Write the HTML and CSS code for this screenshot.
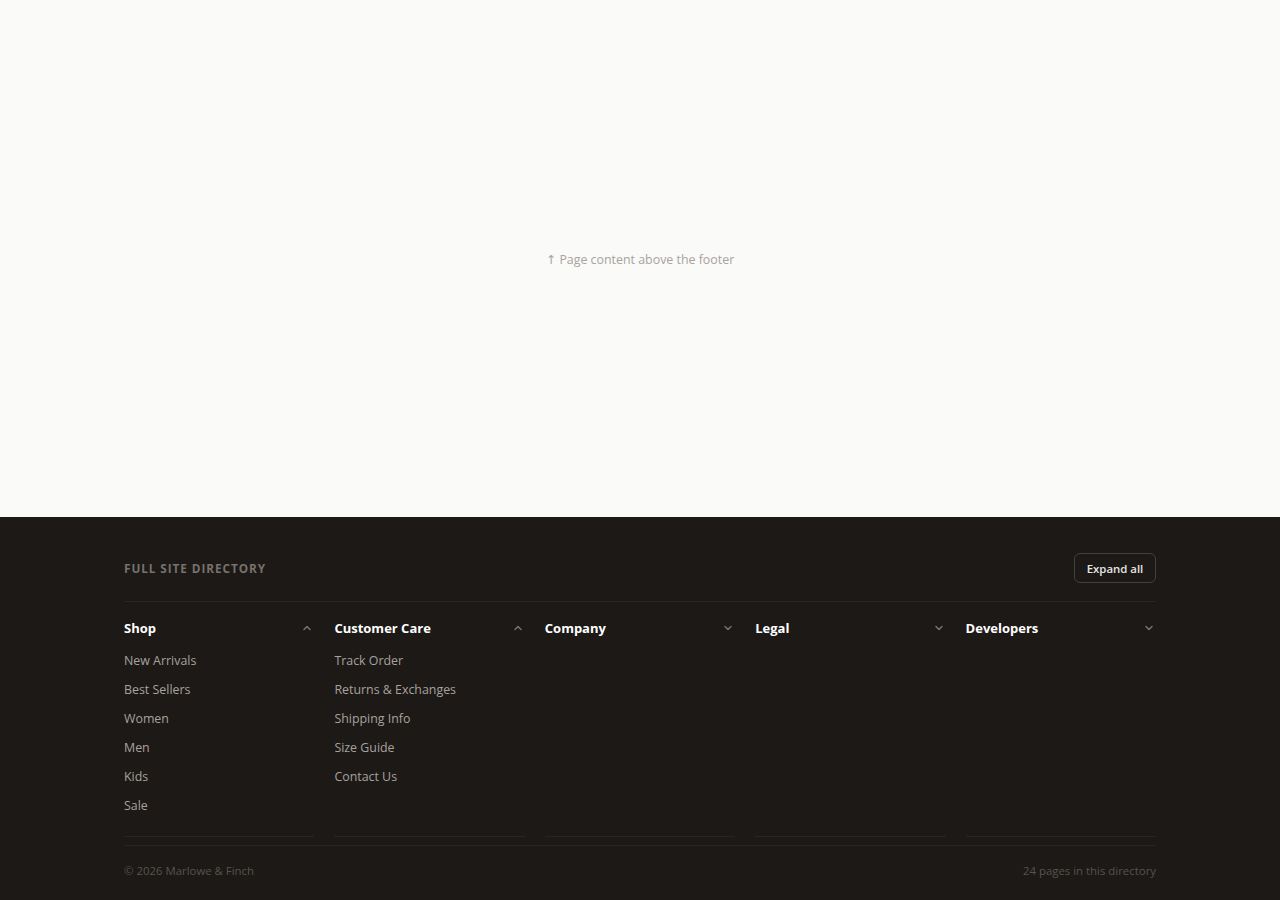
FILE: index.html
```html
<!DOCTYPE html>
<html lang="en">
<head>
<meta charset="utf-8">
<title>Marlowe &amp; Finch</title>
<link rel="stylesheet" href="styles.css">
</head>
<body>
<main class="page">
  <p class="placeholder">↑ Page content above the footer</p>
</main>
<footer class="footer">
  <div class="wrap">
    <div class="dir-head">
      <h2 class="dir-title">Full site directory</h2>
      <button class="expand-btn" type="button">Expand all</button>
    </div>
    <div class="cols">
      <section class="col">
        <div class="col-head"><span>Shop</span>
          <svg class="chev" viewBox="0 0 10 6" width="10" height="6"><path d="M2 4.5 L5 1.5 L8 4.5" /></svg>
        </div>
        <ul class="links">
          <li><a href="#">New Arrivals</a></li>
          <li><a href="#">Best Sellers</a></li>
          <li><a href="#">Women</a></li>
          <li><a href="#">Men</a></li>
          <li><a href="#">Kids</a></li>
          <li><a href="#">Sale</a></li>
        </ul>
      </section>
      <section class="col">
        <div class="col-head"><span>Customer Care</span>
          <svg class="chev" viewBox="0 0 10 6" width="10" height="6"><path d="M2 4.5 L5 1.5 L8 4.5" /></svg>
        </div>
        <ul class="links">
          <li><a href="#">Track Order</a></li>
          <li><a href="#">Returns &amp; Exchanges</a></li>
          <li><a href="#">Shipping Info</a></li>
          <li><a href="#">Size Guide</a></li>
          <li><a href="#">Contact Us</a></li>
        </ul>
      </section>
      <section class="col">
        <div class="col-head"><span>Company</span>
          <svg class="chev" viewBox="0 0 10 6" width="10" height="6"><path d="M2 1.5 L5 4.5 L8 1.5" /></svg>
        </div>
      </section>
      <section class="col">
        <div class="col-head"><span>Legal</span>
          <svg class="chev" viewBox="0 0 10 6" width="10" height="6"><path d="M2 1.5 L5 4.5 L8 1.5" /></svg>
        </div>
      </section>
      <section class="col">
        <div class="col-head"><span>Developers</span>
          <svg class="chev" viewBox="0 0 10 6" width="10" height="6"><path d="M2 1.5 L5 4.5 L8 1.5" /></svg>
        </div>
      </section>
    </div>
    <div class="bottom">
      <span>© 2026 Marlowe &amp; Finch</span>
      <span>24 pages in this directory</span>
    </div>
  </div>
</footer>
</body>
</html>
```
FILE: styles.css
```css
* { box-sizing: border-box; }
html, body { margin: 0; padding: 0; }
body {
  font-family: "Open Sans", "Noto Sans", "DejaVu Sans", sans-serif;
  background: #1c1917;
}
.page {
  height: 517px;
  background: #fafaf9;
  display: flex;
  align-items: center;
  justify-content: center;
}
.placeholder {
  margin: 0;
  padding-top: 2px;
  font-size: 12.4px;
  line-height: 18px;
  color: #a8a29e;
}
.footer {
  background: #1c1917;
  height: 383px;
  padding-top: 36px;
}
.wrap {
  width: 1032px;
  margin: 0 auto;
}
.dir-head {
  display: flex;
  align-items: center;
  justify-content: space-between;
  padding-bottom: 18px;
  border-bottom: 1px solid #292524;
}
.dir-title {
  margin: 0;
  font-size: 11.75px;
  font-weight: 700;
  letter-spacing: 0.08em;
  text-transform: uppercase;
  color: #78716c;
}
.expand-btn {
  font-family: inherit;
  height: 30px;
  width: 82px;
  padding: 0;
  background: transparent;
  border: 1px solid #44403c;
  border-radius: 6px;
  color: #e7e5e4;
  font-size: 11.4px;
  font-weight: 600;
}
.cols {
  display: grid;
  grid-template-columns: repeat(5, 1fr);
  column-gap: 20px;
}
.col {
  padding-top: 16px;
  padding-bottom: 20px;
  border-bottom: 1px solid #292524;
}
.col-head {
  display: flex;
  align-items: center;
  justify-content: space-between;
  height: 20px;
  color: #ffffff;
  font-size: 13px;
  font-weight: 700;
}
.chev {
  fill: none;
  stroke: #78716c;
  stroke-width: 1.5;
  stroke-linecap: round;
  stroke-linejoin: round;
  margin-right: 2px;
}
.links {
  list-style: none;
  margin: 13px 0 0;
  padding: 0;
  display: flex;
  flex-direction: column;
  gap: 9px;
}
.links li {
  font-size: 12.4px;
  line-height: 20px;
}
.links a {
  color: #a8a29e;
  text-decoration: none;
}
.bottom {
  margin-top: 8px;
  border-top: 1px solid #292524;
  padding-top: 16px;
  display: flex;
  justify-content: space-between;
  font-size: 11.4px;
  line-height: 18px;
  color: #57534e;
}
```
